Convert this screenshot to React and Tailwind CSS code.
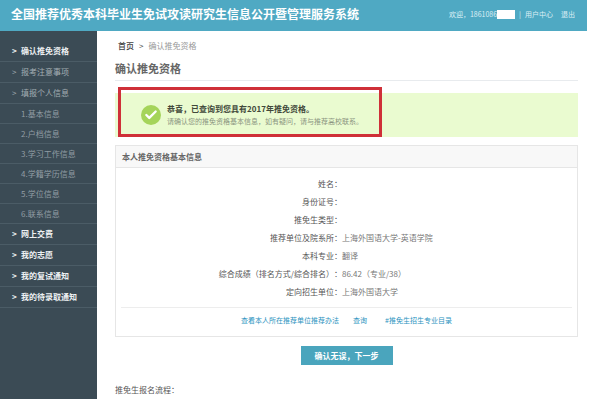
import { Check } from "lucide-react";

const menu = [
  { label: "确认推免资格", active: true },
  { label: "报考注意事项", muted: true },
  {
    label: "填报个人信息",
    muted: true,
    children: [
      "1.基本信息",
      "2.户档信息",
      "3.学习工作信息",
      "4.学籍学历信息",
      "5.学位信息",
      "6.联系信息",
    ],
  },
  { label: "网上交费" },
  { label: "我的志愿" },
  { label: "我的复试通知" },
  { label: "我的待录取通知" },
];

const details = [
  { label: "姓名", value: "" },
  { label: "身份证号", value: "" },
  { label: "推免生类型", value: "" },
  { label: "推荐单位及院系所", value: "上海外国语大学-英语学院" },
  { label: "本科专业", value: "翻译" },
  { label: "综合成绩（排名方式/综合排名）", value: "86.42（专业/38）" },
  { label: "定向招生单位", value: "上海外国语大学" },
];

const Header = () => (
  <header className="flex h-[31px] items-center justify-between bg-[#4fa9c3] pr-3 pb-[3px] pl-[11px] text-white">
    <h1 className="text-[12px] leading-4 font-bold whitespace-nowrap">
      全国推荐优秀本科毕业生免试攻读研究生信息公开暨管理服务系统
    </h1>
    <div className="flex items-center text-[7px] leading-3 whitespace-nowrap text-[#dceff5]">
      <span>欢迎，1861086</span>
      <span className="mr-1 h-[9px] w-[18px] bg-white"></span>
      <span className="mr-1">|</span>
      <a href="#center" className="mr-2">
        用户中心
      </a>
      <a href="#logout">退出</a>
    </div>
  </header>
);

const Sidebar = () => (
  <nav className="w-[97px] shrink-0 bg-[#3b4b55] pt-[10px] text-[8px]">
    <ul>
      {menu.map((item) => (
        <li key={item.label}>
          <a
            href="#menu"
            aria-current={item.active ? "page" : undefined}
            className={`flex h-[21px] items-center border-b border-[#4b5c66] pl-3 ${
              item.muted ? "text-[#a3adb3]" : "font-bold text-[#eef1f3]"
            }`}
          >
            <span className="w-[9px]">&gt;</span>
            {item.label}
          </a>
          {item.children && (
            <ul>
              {item.children.map((child) => (
                <li key={child}>
                  <a
                    href="#menu"
                    className="flex h-5 items-center border-b border-[#4b5c66] pl-[21px] text-[#929da4]"
                  >
                    {child}
                  </a>
                </li>
              ))}
            </ul>
          )}
        </li>
      ))}
    </ul>
  </nav>
);

const Notice = () => (
  <div className="relative mt-3 flex h-[44px] items-center bg-[#eafbd0] pl-[26px]">
    <span className="mr-[6px] flex size-5 items-center justify-center rounded-full bg-[#a5d45a]">
      <Check className="size-[14px] text-white" strokeWidth={4} />
    </span>
    <div>
      <p className="text-[8px] leading-[13px] font-bold text-[#41483a]">
        恭喜，已查询到您具有2017年推免资格。
      </p>
      <p className="text-[7px] leading-[13px] text-[#8b9580]">
        请确认您的推免资格基本信息，如有疑问，请与推荐高校联系。
      </p>
    </div>
    {/* Red highlight frame */}
    <div className="absolute -top-[6px] bottom-0 left-[3px] w-[264px] border-3 border-[#cf3038]"></div>
  </div>
);

const InfoCard = () => (
  <section className="mt-2 border border-[#e6e6e6]">
    <h3 className="flex h-[22px] items-center border-b border-[#e6e6e6] bg-[#f8f8f8] pl-[6px] text-[8px] font-bold text-[#666]">
      本人推免资格基本信息
    </h3>
    <dl className="mx-[5px] border-b border-[#ededed] pt-[7px] pb-[6px] text-[8px] leading-[18px]">
      {details.map((row) => (
        <div key={row.label} className="flex h-[18px]">
          <dt className="w-[49%] text-right text-[#555]">{row.label}：</dt>
          <dd className="text-[#777]">{row.value}</dd>
        </div>
      ))}
    </dl>
    <div className="flex h-7 items-center justify-center gap-[14px] pb-[3px] text-[7px] text-[#2b93c0]">
      <a href="#rules">查看本人所在推荐单位推荐办法</a>
      <a href="#query" className="mr-1">
        查询
      </a>
      <a href="#catalog">#推免生招生专业目录</a>
    </div>
  </section>
);

const App = () => {
  return (
    <div className="bg-white pr-[13px] font-['Noto_Sans_CJK_SC',sans-serif] [text-spacing-trim:space-all]">
      <Header />
      <div className="flex">
        <Sidebar />
        <main className="min-w-0 flex-1 pr-[9px] pb-[3px] pl-[18px]">
          <div className="flex pt-[9px] pl-[3px] text-[8px] leading-3 text-[#999]">
            <a href="#home" className="font-medium text-[#444]">
              首页
            </a>
            <span className="mx-[5px] text-[#444]">&gt;</span>
            <span>确认推免资格</span>
          </div>
          <h2 className="mt-2 border-b border-[#e8ebee] pb-1 text-[11px] leading-4 font-bold text-[#666]">
            确认推免资格
          </h2>
          <Notice />
          <InfoCard />
          <div className="mt-[9px] flex justify-center">
            <button className="h-[19px] w-[92px] bg-[#4aa5bd] text-[8px] font-bold text-white">
              确认无误，下一步
            </button>
          </div>
          <p className="mt-[19px] text-[8px] leading-3 text-[#555]">推免生报名流程：</p>
        </main>
      </div>
    </div>
  );
};

export default App;
